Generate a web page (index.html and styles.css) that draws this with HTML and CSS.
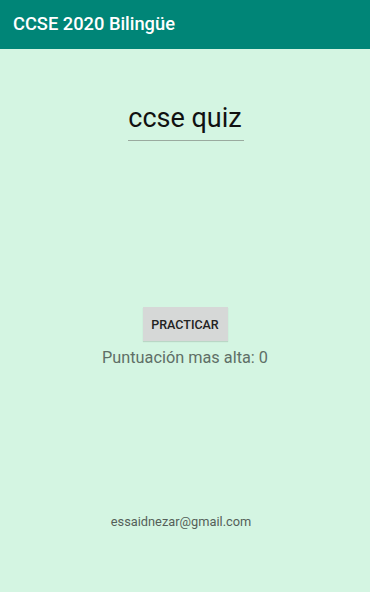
FILE: index.html
```html
<!DOCTYPE html>
<html>
<head>
<meta charset="utf-8">
<link rel="stylesheet" href="styles.css">
</head>
<body>
<div class="app">
  <header class="bar"><span class="bar-title">CCSE 2020 Bilingüe</span></header>
  <main class="content">
    <div class="title-wrap"><span class="title">ccse quiz</span></div>
    <div class="middle">
      <button class="btn">PRACTICAR</button>
      <div class="score">Puntuación mas alta: 0</div>
    </div>
    <div class="email">essaidnezar@gmail.com</div>
  </main>
</div>
</body>
</html>
```
FILE: styles.css
```css
* { box-sizing: border-box; }
html, body { margin: 0; padding: 0; }
body { font-family: Roboto, "Noto Sans", sans-serif; width: 370px; height: 592px; overflow: hidden; }
.app { width: 370px; height: 592px; display: flex; flex-direction: column; background: #d4f5e2; }
.bar { height: 49px; background: #008577; display: flex; align-items: center; padding-left: 13px; }
.bar-title { color: #fff; font-size: 18.3px; font-weight: 500; line-height: 1; }
.content { flex: 1; display: flex; flex-direction: column; align-items: center; }
.title-wrap { margin-top: 53px; padding-left: 2px; }
.title { display: inline-block; font-size: 27px; color: #111; line-height: 32px; padding: 0 2px 6px 0; border-bottom: 1px solid #9aaa9f; }
.middle { margin-top: 166px; display: flex; flex-direction: column; align-items: center; }
.btn { width: 85px; height: 34px; border: none; background: #d6d8d7; font-family: Roboto, sans-serif; font-size: 12.5px; font-weight: 500; color: #222; padding: 0; box-shadow: 0 1px 1px rgba(0,0,0,0.12); }
.score { margin-top: 7px; font-size: 16.3px; color: #5f6f66; line-height: 20px; }
.email { margin-top: 146px; margin-right: 8px; font-size: 12.8px; color: #555f59; line-height: 16px; }
```
